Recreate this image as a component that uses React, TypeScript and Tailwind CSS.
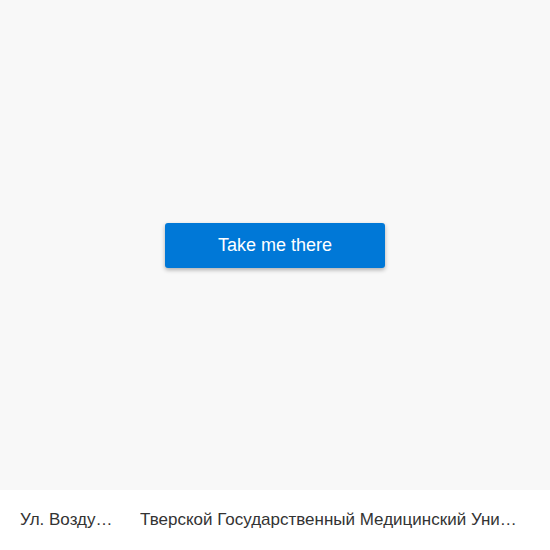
import React from 'react';

const App: React.FC = () => {
  return (
    <div className="flex h-[550px] w-[550px] flex-col bg-[#f8f8f8] font-['Liberation_Sans',Arial,sans-serif]">
      {/* Map placeholder with call-to-action */}
      <div className="flex flex-1 items-center justify-center">
        <button className="mt-px h-[45px] w-[220px] rounded-[3px] bg-[#0078d7] text-[18px] text-white shadow-[0_2px_4px_rgba(0,0,0,0.3)]">
          Take me there
        </button>
      </div>

      {/* Route summary */}
      <div className="flex h-[60px] items-center bg-white px-5 text-[17px] text-[#333333]">
        <span className="w-[96px] shrink-0 truncate">Ул. Воздухофлотская</span>
        <span className="ml-6 min-w-0 flex-1 truncate pr-[6px]">
          Тверской Государственный Медицинский Университет
        </span>
      </div>
    </div>
  );
};

export default App;
